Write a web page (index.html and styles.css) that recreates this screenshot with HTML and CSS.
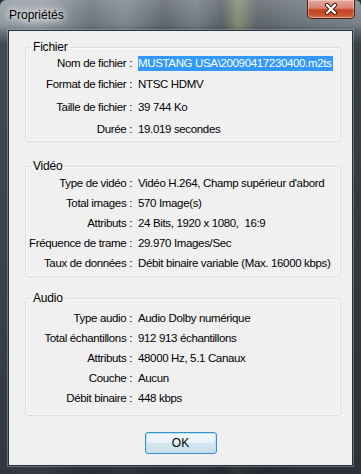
FILE: index.html
```html
<!DOCTYPE html>
<html lang="fr">
<head>
<meta charset="utf-8">
<title>Propriétés</title>
<link rel="stylesheet" href="styles.css">
</head>
<body>
<div class="window">
  <div class="titlebar">
    <span class="title">Propriétés</span>
    <div class="close">
      <svg width="14" height="12" viewBox="0 0 14 12">
        <path d="M3 2 L11 10 M11 2 L3 10" stroke="#3b1a12" stroke-width="4.2" stroke-linecap="round" fill="none"/>
        <path d="M3 2 L11 10 M11 2 L3 10" stroke="#ffffff" stroke-width="2.4" stroke-linecap="round" fill="none"/>
      </svg>
    </div>
  </div>
  <div class="client">
    <fieldset class="group g-file">
      <legend>Fichier</legend>
      <div class="rows rows-file">
        <div class="label">Nom de fichier :</div><div class="value"><span class="sel">MUSTANG USA\20090417230400.m2ts</span></div>
        <div class="label">Format de fichier :</div><div class="value">NTSC HDMV</div>
        <div class="label">Taille de fichier :</div><div class="value">39 744 Ko</div>
        <div class="label">Durée :</div><div class="value">19.019 secondes</div>
      </div>
    </fieldset>
    <fieldset class="group g-video">
      <legend>Vidéo</legend>
      <div class="rows">
        <div class="label">Type de vidéo :</div><div class="value">Vidéo H.264, Champ supérieur d'abord</div>
        <div class="label">Total images :</div><div class="value">570 Image(s)</div>
        <div class="label">Attributs :</div><div class="value">24 Bits, 1920 x 1080,&nbsp; 16:9</div>
        <div class="label">Fréquence de trame :</div><div class="value">29.970 Images/Sec</div>
        <div class="label">Taux de données :</div><div class="value">Débit binaire variable (Max. 16000 kbps)</div>
      </div>
    </fieldset>
    <fieldset class="group g-audio">
      <legend>Audio</legend>
      <div class="rows">
        <div class="label">Type audio :</div><div class="value">Audio Dolby numérique</div>
        <div class="label">Total échantillons :</div><div class="value">912 913 échantillons</div>
        <div class="label">Attributs :</div><div class="value">48000 Hz, 5.1 Canaux</div>
        <div class="label">Couche :</div><div class="value">Aucun</div>
        <div class="label">Débit binaire :</div><div class="value">448 kbps</div>
      </div>
    </fieldset>
    <div class="actions">
      <button class="btn" type="button">OK</button>
    </div>
  </div>
</div>
</body>
</html>
```

FILE: styles.css
```css
html, body {
  margin: 0;
  padding: 0;
  background: #2a3036;
}

.window {
  width: 361px;
  height: 474px;
  box-sizing: border-box;
  border-radius: 6px 6px 0 0;
  background:
    linear-gradient(180deg, rgba(255,255,255,0.22) 0, rgba(255,255,255,0.06) 28px, rgba(0,0,0,0) 30px),
    linear-gradient(180deg, rgba(0,0,0,0) 0, rgba(0,0,0,0) 24px, rgba(22,27,32,0.6) 44px, rgba(22,27,32,0.75) 100%),
    linear-gradient(90deg, #848e97 0, #8d969e 40px, #5f6871 90px, #747d86 125px, #515961 165px, #67717b 195px, #4c545b 222px, #7a8266 238px, #50585f 258px, #5f6871 300px, #6d767e 361px);
  font-family: "Liberation Sans", Arial, sans-serif;
  font-size: 11.5px;
  letter-spacing: -0.35px;
  color: #000;
  overflow: hidden;
}

.titlebar {
  height: 30px;
  display: flex;
  align-items: flex-start;
  padding-left: 9px;
}

.title {
  font-family: "Liberation Sans", Arial, sans-serif;
  font-size: 12px;
  letter-spacing: 0;
  line-height: 16px;
  margin-top: 7px;
  color: #000;
  text-shadow: 0 0 6px #fff, 0 0 10px #fff, 0 0 14px rgba(255,255,255,0.8);
}

.close {
  margin-left: auto;
  margin-right: 6px;
  width: 48px;
  height: 19px;
  box-sizing: border-box;
  border: 1px solid #4a2119;
  border-top: none;
  border-radius: 0 0 5px 5px;
  background: linear-gradient(180deg, #e4a89a 0, #d88470 45%, #c4401f 55%, #c85530 85%, #d87a50 100%);
  box-shadow: inset 0 0 0 1px rgba(255,255,255,0.35);
  display: flex;
  align-items: center;
  justify-content: center;
}

.client {
  margin: 0 8px;
  height: 436px;
  box-sizing: border-box;
  border: 1px solid #27313a;
  box-shadow: 0 0 0 1px rgba(200,210,220,0.35);
  background: #f0f0f0;
  padding: 0 11px 0 16px;
  display: flex;
  flex-direction: column;
}

.group {
  margin: 0;
  padding: 0;
  min-width: 0;
  border: 1px solid #d5dfe5;
  border-radius: 3px;
  box-shadow: inset 0 0 0 1px rgba(255,255,255,0.6);
}

.group legend {
  margin-left: 5px;
  padding: 0 2px;
  line-height: 12px;
  font-size: 12px;
  letter-spacing: -0.2px;
}

.g-file { margin-top: 10px; padding-bottom: 2px; }
.g-video { margin-top: 18px; padding-top: 1px; padding-bottom: 3px; }
.g-audio { margin-top: 15px; padding-top: 4px; padding-bottom: 7px; }

.rows {
  display: grid;
  grid-template-columns: 106px 1fr;
  grid-auto-rows: 20px;
  column-gap: 6px;
  align-items: center;
}

.rows-file {
  grid-template-rows: 20px 23px 23px 20px;
}

.label {
  text-align: right;
  white-space: nowrap;
  line-height: 15px;
}

.value {
  white-space: nowrap;
  line-height: 15px;
}

.sel {
  display: inline-block;
  background: #3399ff;
  color: #fff;
  line-height: 15px;
  padding-right: 1px;
}

.actions {
  margin-top: 16px;
  display: flex;
  justify-content: center;
  margin-left: -5px;
}

.btn {
  width: 72px;
  height: 22px;
  box-sizing: border-box;
  border: 1px solid #3c8fc4;
  border-radius: 3px;
  background: linear-gradient(180deg, #f2f8fb 0, #e7f2f8 48%, #d4e6f0 52%, #c9dfea 100%);
  box-shadow: inset 0 0 0 1px #b6e3f6;
  font-family: "Liberation Sans", Arial, sans-serif;
  font-size: 12px;
  color: #000;
  padding: 0;
}
```
